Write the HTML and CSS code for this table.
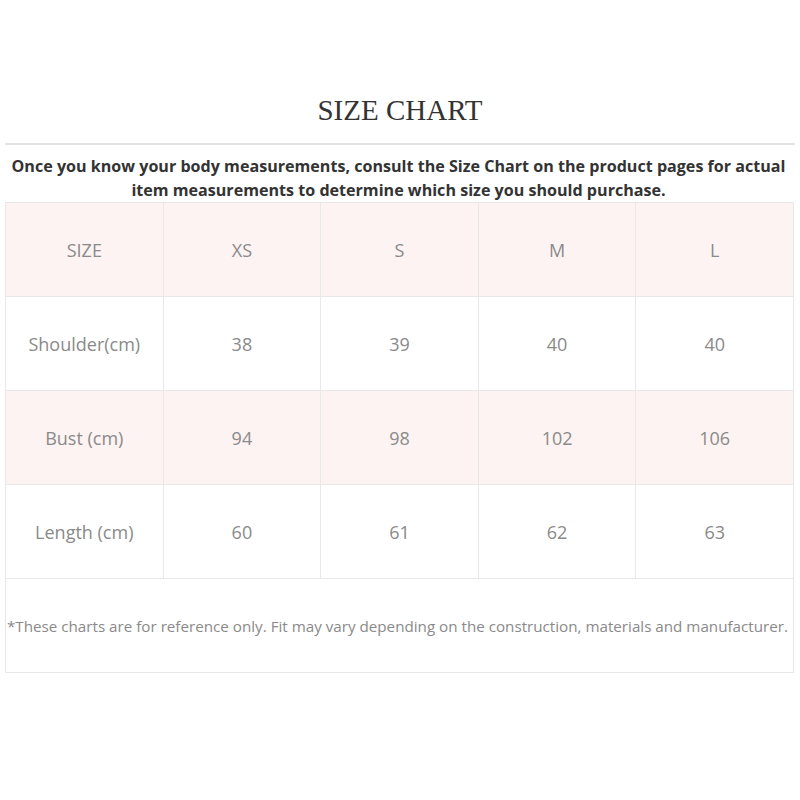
FILE: index.html
```html
<!DOCTYPE html>
<html>
<head>
<meta charset="utf-8">
<link rel="stylesheet" href="styles.css">
</head>
<body>
<div class="page">
  <h1 class="title">SIZE CHART</h1>
  <hr class="rule">
  <p class="intro">Once you know your body measurements, consult the Size Chart on the product pages for actual item measurements to determine which size you should purchase.</p>
  <table class="chart">
    <tr class="pink"><td>SIZE</td><td>XS</td><td>S</td><td>M</td><td>L</td></tr>
    <tr><td>Shoulder(cm)</td><td>38</td><td>39</td><td>40</td><td>40</td></tr>
    <tr class="pink"><td>Bust (cm)</td><td>94</td><td>98</td><td>102</td><td>106</td></tr>
    <tr><td>Length (cm)</td><td>60</td><td>61</td><td>62</td><td>63</td></tr>
    <tr><td colspan="5" class="note">*These charts are for reference only. Fit may vary depending on the construction, materials and manufacturer.</td></tr>
  </table>
</div>
</body>
</html>
```

FILE: styles.css
```css
html, body {
  margin: 0;
  padding: 0;
  background: #fff;
}
.page {
  width: 790px;
  margin: 0 auto;
  padding-top: 91px;
  display: flex;
  flex-direction: column;
  align-items: stretch;
}
.title {
  margin: 0;
  font-family: "Liberation Serif", "DejaVu Serif", serif;
  font-weight: normal;
  font-size: 29px;
  line-height: 38px;
  color: #333;
  text-align: center;
}
.rule {
  margin: 14px 0 0;
  border: 0;
  height: 2px;
  background: #e2e2e2;
}
.intro {
  margin: 9px 0 0;
  padding-right: 3px;
  font-family: "Open Sans", sans-serif;
  font-weight: bold;
  font-size: 16.1px;
  line-height: 24px;
  color: #333;
  text-align: center;
}
.chart {
  width: 789px;
  border-collapse: collapse;
  table-layout: fixed;
  font-family: "Open Sans", sans-serif;
  color: #8a8a8a;
}
.chart td {
  border: 1px solid #e8e8e8;
  height: 93px;
  padding: 0;
  text-align: center;
  font-size: 18px;
}
.chart .pink td {
  background: #fdf3f2;
}
.chart td.note {
  font-size: 15.2px;
  text-align: left;
  padding-left: 1px;
  white-space: nowrap;
}
```
